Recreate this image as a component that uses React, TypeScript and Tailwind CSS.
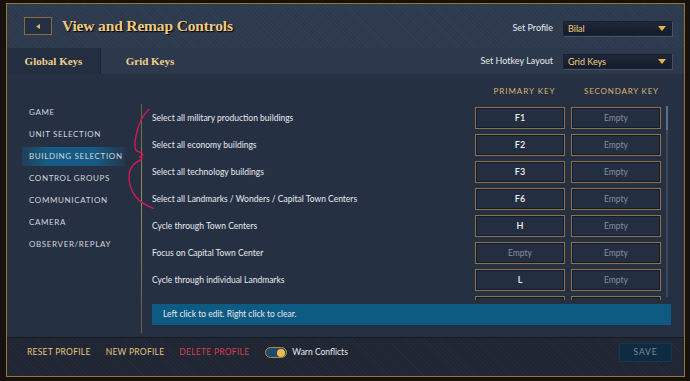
import React from 'react';

const navItems = [
    'Game',
    'Unit Selection',
    'Building Selection',
    'Control Groups',
    'Communication',
    'Camera',
    'Observer/Replay',
];

const rows = [
    { label: 'Select all military production buildings', primary: 'F1', secondary: '' },
    { label: 'Select all economy buildings', primary: 'F2', secondary: '' },
    { label: 'Select all technology buildings', primary: 'F3', secondary: '' },
    { label: 'Select all Landmarks / Wonders / Capital Town Centers', primary: 'F6', secondary: '' },
    { label: 'Cycle through Town Centers', primary: 'H', secondary: '' },
    { label: 'Focus on Capital Town Center', primary: '', secondary: '' },
    { label: 'Cycle through individual Landmarks', primary: 'L', secondary: '' },
];

function Dropdown({ value }: { value: string }) {
    return (
        <div className="w-[109px] h-[15px] flex items-center justify-between pl-[4px] pr-[5px] bg-[linear-gradient(#1e283b,#141b2a)] border border-[#1a2232] shadow-[1px_1px_0_#445268]">
            <span className="text-[9px] leading-none text-[#f2d27e]">{value}</span>
            <svg width="8" height="5" viewBox="0 0 8 5">
                <path d="M0 0 L8 0 L4 5 Z" fill="#eab345" />
            </svg>
        </div>
    );
}

function KeyBox({ value, hideText }: { value: string; hideText?: boolean }) {
    return (
        <div className="w-[90px] h-[22px] flex items-center justify-center border border-[#8c7244] bg-[#232e41] shadow-[inset_0_0_0_1px_#151c29]">
            {hideText ? null : value ? (
                <span className="text-[9px] font-semibold text-[#f1f1f1]">{value}</span>
            ) : (
                <span className="text-[8.5px] text-[#858e9b]">Empty</span>
            )}
        </div>
    );
}

function Header() {
    return (
        <div className="h-[44px] flex items-center pl-[17px] pr-[12px] bg-[#2d3a4e] bg-[image:repeating-linear-gradient(45deg,rgba(255,255,255,0.025)_0_1px,transparent_1px_3px)]">
            <div className="w-[28px] h-[18px] flex items-center justify-center border border-[#8a6b37] bg-[#243045]">
                <svg width="4" height="5" viewBox="0 0 4 5">
                    <path d="M4 0 L0 2.5 L4 5 Z" fill="#e7b54e" />
                </svg>
            </div>
            <h1 className="ml-[10px] font-['Liberation_Serif',serif] font-bold text-[15.5px] tracking-[-0.01em] text-[#efca80] [text-shadow:1px_1px_1px_#000]">
                View and Remap Controls
            </h1>
            <div className="ml-auto flex items-center gap-[10px] mt-[4px]">
                <span className="text-[9px] text-[#e6e8ec]">Set Profile</span>
                <Dropdown value="Bilal" />
            </div>
        </div>
    );
}

function Tabs() {
    return (
        <div className="h-[26px] flex items-stretch pr-[12px] bg-[#2c394c]">
            <div className="w-[94px] flex items-center justify-center bg-[#232e41] border-r border-[#1b2433]">
                <span className="font-['Liberation_Serif',serif] font-bold text-[11px] text-[#f0cf8a]">Global Keys</span>
            </div>
            <div className="w-[98px] flex items-center justify-center">
                <span className="font-['Liberation_Serif',serif] font-bold text-[11px] text-[#f0cf8a]">Grid Keys</span>
            </div>
            <div className="ml-auto flex items-center gap-[10px]">
                <span className="text-[9px] text-[#e6e8ec]">Set Hotkey Layout</span>
                <Dropdown value="Grid Keys" />
            </div>
        </div>
    );
}

function Nav() {
    return (
        <div className="w-[134px] pt-[27px] flex flex-col">
            {navItems.map(item => {
                const active = item === 'Building Selection';
                return (
                    <div key={item} className="h-[22px] flex items-center">
                        <div
                            className={
                                active
                                    ? 'ml-[15px] w-[103px] h-[19px] flex items-center pl-[7px] bg-[linear-gradient(90deg,rgba(22,92,134,0.35),#165b84_25%,#165b84_70%,rgba(22,92,134,0.15))]'
                                    : 'ml-[15px] w-[103px] h-[19px] flex items-center pl-[7px]'
                            }
                        >
                            <span className="whitespace-nowrap text-[8px] uppercase tracking-[0.08em] text-[#d3d6dc]">{item}</span>
                        </div>
                    </div>
                );
            })}
        </div>
    );
}

function KeyList() {
    return (
        <div className="flex-1 flex flex-col pl-[10px] pr-[13px]">
            {/* column headers */}
            <div className="h-[32px] flex items-center pt-[2px]">
                <div className="flex-1" />
                <div className="w-[90px] text-center pl-[9px] text-[8px] uppercase tracking-[0.12em] text-[#d9b66c]">Primary Key</div>
                <div className="w-[90px] ml-[6px] text-center pl-[11px] text-[8px] uppercase tracking-[0.1em] text-[#d9b66c]">Secondary Key</div>
                <div className="w-[10px]" />
            </div>

            <div className="h-[194px] flex overflow-hidden">
                <div className="flex-1 flex flex-col pt-[1px]">
                    {rows.map(row => (
                        <div key={row.label} className="h-[27px] shrink-0 flex items-start">
                            <div className="flex-1 h-[22px] flex items-center">
                                <span className="text-[8.5px] text-[#e8eaee]">{row.label}</span>
                            </div>
                            <KeyBox value={row.primary} />
                            <div className="ml-[6px]">
                                <KeyBox value={row.secondary} />
                            </div>
                        </div>
                    ))}
                    {/* next row, mostly hidden under the hint bar */}
                    <div className="h-[27px] shrink-0 flex items-start">
                        <div className="flex-1" />
                        <KeyBox value="" hideText />
                        <div className="ml-[6px]">
                            <KeyBox value="" hideText />
                        </div>
                    </div>
                </div>
                <div className="w-[10px] pl-[5px] pb-[3px]">
                    <div className="w-[2px] h-full bg-[#3a4659]">
                        <div className="w-[2px] h-[24px] bg-[#5d6f88]" />
                    </div>
                </div>
            </div>

            <div className="mt-[4px] h-[21px] flex items-center pl-[11px] bg-[#0d5a82]">
                <span className="text-[8.5px] text-[#e4eaf0]">Left click to edit. Right click to clear.</span>
            </div>
        </div>
    );
}

function Footer() {
    return (
        <div className="h-[39px] flex items-center pb-[9px] pl-[20px] pr-[12px] bg-[#1f2532] border-t border-[#141a24] bg-[image:repeating-linear-gradient(45deg,rgba(255,255,255,0.02)_0_1px,transparent_1px_3px)]">
            <span className="text-[8.5px] uppercase tracking-[0.03em] text-[#e3c47f]">Reset Profile</span>
            <span className="ml-[15px] text-[8.5px] uppercase tracking-[0.03em] text-[#e3c47f]">New Profile</span>
            <span className="ml-[15px] text-[8.5px] uppercase tracking-[0.03em] text-[#d3404c]">Delete Profile</span>
            <div className="ml-[16px] w-[22px] h-[11px] rounded-full border border-[#b08a45] bg-[#1f4a6e] flex items-center justify-end pr-[1px]">
                <div className="w-[8px] h-[8px] rounded-full bg-[#f0b848]" />
            </div>
            <span className="ml-[5px] text-[8.5px] text-[#e8eaee]">Warn Conflicts</span>
            <div className="ml-auto w-[53px] h-[19px] flex items-center justify-center bg-[#0f2b42] border border-[#163650]">
                <span className="text-[8.5px] uppercase tracking-[0.1em] text-[#7d8a98]">Save</span>
            </div>
        </div>
    );
}

function Annotation() {
    return (
        <svg className="absolute inset-0 pointer-events-none" width="690" height="381" viewBox="0 0 690 381">
            <path
                d="M149.3 109.3 C143 114 138.5 124 136 136 C134.5 143 135 148 136 150.5 C138 151.5 142.5 152.5 142.7 154.5 C142.5 156 139.5 156.5 140 157 C142 157.5 143.5 158.5 140.5 160 C136 162 131 166 129.5 172 C128 180 130 190 136 197 C140 202 146 205.5 153.3 208.3"
                fill="none"
                stroke="#d4175b"
                strokeWidth="1.4"
                strokeLinecap="round"
            />
        </svg>
    );
}

export default function App() {
    return (
        <div className="relative w-[690px] h-[381px] bg-[#16110c] pt-[3px] pl-[6px] pr-[5px] pb-[4px] font-['Lato',sans-serif]">
            <div className="h-full flex flex-col border border-[#9a7434] bg-[#253043] overflow-hidden">
                <Header />
                <Tabs />
                <div className="h-[263px] flex">
                    <Nav />
                    <div className="w-px mt-[30px] mb-[4px] bg-[linear-gradient(#6f5d3e,#a8884f_40%,#6b5a3e)]" />
                    <KeyList />
                </div>
                <Footer />
            </div>
            <Annotation />
        </div>
    );
}
